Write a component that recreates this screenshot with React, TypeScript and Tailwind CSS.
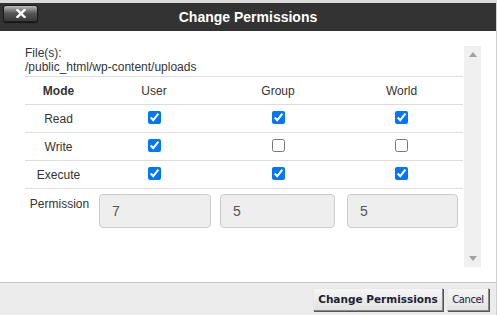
import { useState } from "react";

type Perm = { label: string; user: boolean; group: boolean; world: boolean };

const INITIAL: Perm[] = [
  { label: "Read", user: true, group: true, world: true },
  { label: "Write", user: true, group: false, world: false },
  { label: "Execute", user: true, group: true, world: true },
];

function digit(rows: Perm[], key: "user" | "group" | "world") {
  return (rows[0][key] ? 4 : 0) + (rows[1][key] ? 2 : 0) + (rows[2][key] ? 1 : 0);
}

function CloseButton() {
  return (
    <button className="absolute left-[3px] top-[2px] w-[35px] h-[17px] rounded-[3px] border border-[#1c1c1c] bg-gradient-to-b from-[#bcbcbc] via-[#555] to-[#3a3a3a] shadow-[0_1px_1px_rgba(0,0,0,0.6)] flex items-center justify-center">
      <svg width="10" height="9" viewBox="0 0 10 9">
        <path d="M1.5 1 L8.5 8 M8.5 1 L1.5 8" stroke="#fff" strokeWidth="2.4" strokeLinecap="square" />
      </svg>
    </button>
  );
}

function ScrollTrack() {
  return (
    <div className="w-[17px] mt-[15px] mb-[15px] bg-[#f0f0f0] flex flex-col items-center justify-between py-[6px]">
      <svg width="8" height="5" viewBox="0 0 8 5">
        <path d="M0 5 L4 0 L8 5 Z" fill="#a3a3a3" />
      </svg>
      <svg width="8" height="5" viewBox="0 0 8 5">
        <path d="M0 0 L8 0 L4 5 Z" fill="#a3a3a3" />
      </svg>
    </div>
  );
}

export default function App() {
  const [rows, setRows] = useState<Perm[]>(INITIAL);

  const toggle = (i: number, key: "user" | "group" | "world") => {
    setRows((prev) => prev.map((r, j) => (j === i ? { ...r, [key]: !r[key] } : r)));
  };

  const cols: ("user" | "group" | "world")[] = ["user", "group", "world"];

  return (
    <div className="w-[497px] h-[315px] flex flex-col bg-white font-['Liberation_Sans',Arial,sans-serif] text-[#333] overflow-hidden">
      <div className="h-[3px] bg-[#dcdcdc]" />
      <div className="flex-1 flex flex-col border-r border-[#cfcfcf]">
        {/* title bar */}
        <div className="relative h-[28px] bg-[#333] flex items-center justify-center">
          <CloseButton />
          <span className="text-white font-bold text-[14px] leading-none">Change Permissions</span>
        </div>

        {/* body */}
        <div className="flex-1 flex">
          <div className="w-[464px] pl-[25px] pt-[15px]">
            <div className="text-[12px] leading-[14px]">File(s):</div>
            <div className="text-[12px] leading-[14px]">/public_html/wp-content/uploads</div>
            <table className="mt-[2px] w-[438px] table-fixed border-collapse text-[12px]">
              <colgroup>
                <col className="w-[67px]" />
                <col className="w-[124px]" />
                <col className="w-[124px]" />
                <col className="w-[123px]" />
              </colgroup>
              <thead>
                <tr className="h-[28px] border-t border-[#ddd]">
                  <th className="font-bold text-center align-middle">Mode</th>
                  <th className="font-normal text-center align-middle">User</th>
                  <th className="font-normal text-center align-middle">Group</th>
                  <th className="font-normal text-center align-middle">World</th>
                </tr>
              </thead>
              <tbody>
                {rows.map((r, i) => (
                  <tr key={r.label} className="h-[28px] border-t border-[#ddd]">
                    <td className="text-center align-middle">{r.label}</td>
                    {cols.map((c) => (
                      <td key={c} className="text-center align-middle">
                        <input
                          type="checkbox"
                          checked={r[c]}
                          onChange={() => toggle(i, c)}
                          className="relative -top-[2px] m-0 w-[13px] h-[13px] align-middle"
                        />
                      </td>
                    ))}
                  </tr>
                ))}
                <tr className="border-t border-[#ddd]">
                  <td className="text-center align-top pt-[6px] pl-[2px]">Permission</td>
                  {cols.map((c, k) => (
                    <td key={c} className={k === 1 ? "pt-[5px] pl-[4px] pr-[5px]" : "pt-[5px] pl-[7px] pr-[5px]"}>
                      <div className="h-[34px] rounded-[4px] border border-[#ccc] bg-[#eee] px-[12px] flex items-center text-[14px] text-[#555]">
                        {digit(rows, c)}
                      </div>
                    </td>
                  ))}
                </tr>
              </tbody>
            </table>
          </div>
          <ScrollTrack />
        </div>

        {/* footer */}
        <div className="h-[33px] border-t border-[#c8c8c8] bg-[#ececec] flex items-center justify-end gap-[4px] pr-[7px] pt-[1px]">
          <button className="h-[23px] w-[130px] border border-[#8a8a8a] border-t-[#e8e8e8] border-l-[#e8e8e8] shadow-[1px_1px_0_#555] bg-gradient-to-b from-[#f6f6f6] to-[#e2e2e2] font-['DejaVu_Sans',Verdana,sans-serif] font-bold text-[10.5px] text-[#1e2233]">
            Change Permissions
          </button>
          <button className="h-[23px] w-[42px] border border-[#8a8a8a] border-t-[#e8e8e8] border-l-[#e8e8e8] shadow-[1px_1px_0_#555] bg-gradient-to-b from-[#f6f6f6] to-[#e2e2e2] font-['DejaVu_Sans',Verdana,sans-serif] text-[10px] tracking-[-0.4px] text-[#1e2233]">
            Cancel
          </button>
        </div>
      </div>
    </div>
  );
}
